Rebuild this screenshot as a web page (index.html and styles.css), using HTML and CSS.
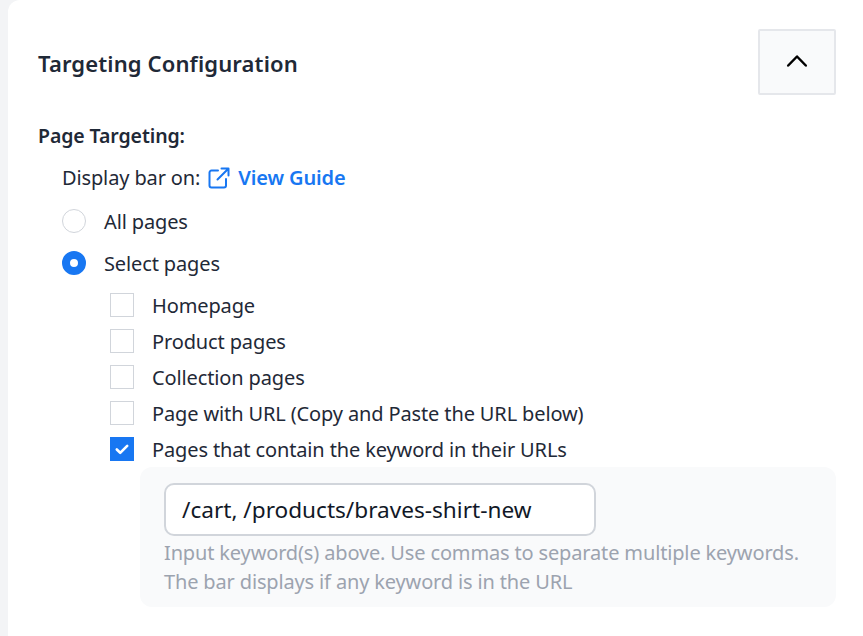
FILE: index.html
```html
<!DOCTYPE html>
<html lang="en">
<head>
<meta charset="utf-8">
<title>Targeting Configuration</title>
<link rel="stylesheet" href="styles.css">
</head>
<body>
<main class="card">
  <header class="card-header">
    <h2 class="title">Targeting Configuration</h2>
    <button class="collapse" type="button" aria-label="Collapse">
      <svg width="24" height="24" viewBox="0 0 24 24" fill="none" stroke="#000" stroke-width="2.500" stroke-linecap="round" stroke-linejoin="round"><path d="M3.200 15.500 12 6.500 20.800 15.500"/></svg>
    </button>
  </header>
  <h3 class="section-label">Page Targeting:</h3>
  <div class="section-body">
    <div class="guide-row">
      <span>Display bar on:</span>
      <a class="guide" href="#">
        <svg width="22" height="22" viewBox="0 0 22 22" fill="none" stroke="#1877f2" stroke-width="2" stroke-linecap="round" stroke-linejoin="round"><path d="M10 3.500H3.500a2 2 0 0 0-2 2V18.500a2 2 0 0 0 2 2H16a2 2 0 0 0 2-2V12"/><path d="M9.500 12.500 20 2M13.500 1.500H20.500V8.500"/></svg>
        <span>View Guide</span>
      </a>
    </div>
    <label class="radio-row"><span class="radio"></span><span class="label-text">All pages</span></label>
    <label class="radio-row"><span class="radio radio-on"></span><span class="label-text">Select pages</span></label>
    <ul class="checks">
      <li class="check-row"><span class="box"></span><span class="label-text">Homepage</span></li>
      <li class="check-row"><span class="box"></span><span class="label-text">Product pages</span></li>
      <li class="check-row"><span class="box"></span><span class="label-text">Collection pages</span></li>
      <li class="check-row"><span class="box"></span><span class="label-text">Page with URL (Copy and Paste the URL below)</span></li>
      <li class="check-row"><span class="box box-on"><svg width="16" height="16" viewBox="0 0 16 16" fill="none" stroke="#fff" stroke-width="2.600" stroke-linecap="round" stroke-linejoin="round"><path d="M2.800 8.500 6.200 11.800 13.200 4.800"/></svg></span><span class="label-text">Pages that contain the keyword in their URLs</span></li>
    </ul>
    <div class="keyword-panel">
      <div class="keyword-input">/cart, /products/braves-shirt-new</div>
      <p class="hint">Input keyword(s) above. Use commas to separate multiple keywords.<br>The bar displays if any keyword is in the URL</p>
    </div>
  </div>
</main>
</body>
</html>
```
FILE: styles.css
```css
* { box-sizing: border-box; }
html, body { height: 100%; }
body {
  margin: 0;
  overflow: hidden;
  background: #f3f4f6;
  color: #1f2937;
  font-family: "Noto Sans", sans-serif;
  font-size: 20px;
  line-height: 30px;
  letter-spacing: -0.13px;
  padding-left: 8px;
}
.card {
  background: #fff;
  height: 100%;
  border-radius: 12px 0 0 0;
  padding: 29px 27px 0 30px;
}
.card-header {
  display: flex;
  justify-content: space-between;
  align-items: center;
}
.title {
  margin: 0;
  padding-top: 2px;
  font-size: 22px;
  line-height: 32px;
  font-weight: 600;
  letter-spacing: 0.13px;
}
.collapse {
  width: 78px;
  height: 66px;
  padding: 0;
  display: flex;
  align-items: center;
  justify-content: center;
  background: #f9fafb;
  border: 2px solid #e5e7eb;
  border-radius: 2px;
}
.section-label {
  margin: 26px 0 0;
  font-size: 19.500px;
  line-height: 30px;
  font-weight: 600;
  letter-spacing: -0.1px;
}
.section-body { padding-left: 24px; }
.guide-row {
  margin-top: 12px;
  display: flex;
  align-items: center;
  gap: 8px;
}
.guide {
  display: flex;
  align-items: center;
  gap: 8px;
  color: #1877f2;
  font-weight: 600;
  text-decoration: none;
}
.label-text {
  height: 30px;
  line-height: 32px;
}
.radio-row {
  margin-top: 12px;
  height: 30px;
  display: flex;
  align-items: center;
  gap: 18px;
}
.guide-row + .radio-row { margin-top: 13px; }
.radio {
  width: 24px;
  height: 24px;
  border-radius: 50%;
  border: 1px solid #d1d5db;
  background: #fff;
}
.radio-on { border: 8px solid #1877f2; }
.checks {
  list-style: none;
  margin: 9px 0 0;
  padding: 0 0 0 48px;
}
.check-row {
  display: flex;
  align-items: center;
  gap: 18px;
  height: 36px;
}
.box {
  width: 24px;
  height: 24px;
  border: 1px solid #d1d5db;
  background: #fff;
  display: flex;
  align-items: center;
  justify-content: center;
}
.box-on { background: #1877f2; border-color: #1877f2; }
.keyword-panel {
  margin: 0 0 0 78px;
  padding: 16px 24px 11px;
  background: #f9fafb;
  border-radius: 12px;
}
.keyword-input {
  width: 432px;
  height: 53px;
  padding: 0 16px;
  border: 2px solid #d1d5db;
  border-radius: 10px;
  background: #fff;
  color: #111827;
  font-size: 22.600px;
  line-height: 49px;
  letter-spacing: 0;
}
.hint {
  margin: 2px 0 0;
  color: #9ca3af;
  font-size: 20px;
  line-height: 29px;
  letter-spacing: -0.15px;
}
```
